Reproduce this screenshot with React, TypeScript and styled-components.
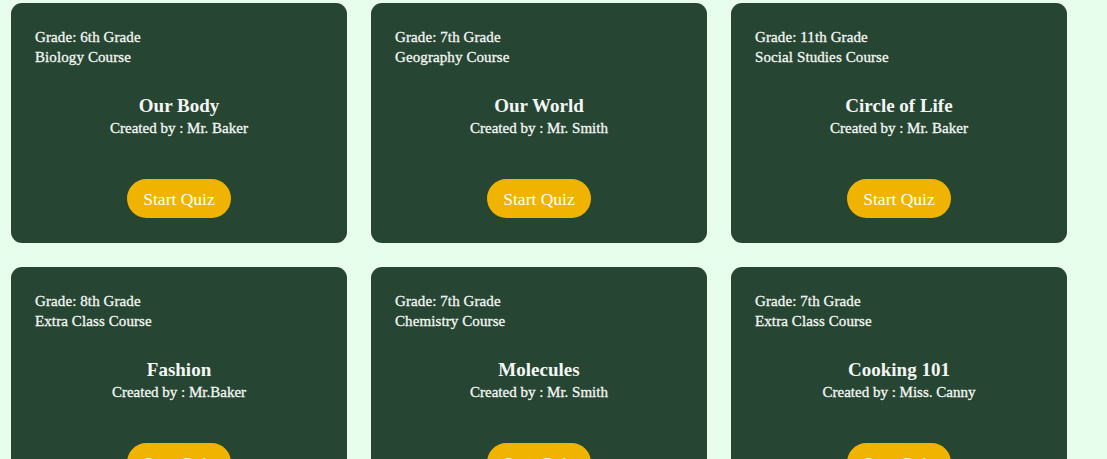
import React from "react";
import styled, { createGlobalStyle } from "styled-components";

const Global = createGlobalStyle`
  html, body { margin: 0; padding: 0; background: #e8feed; }
  body { font-family: "Liberation Serif", "Times New Roman", serif; }
`;

const Grid = styled.div`
  display: grid;
  grid-template-columns: repeat(3, 336px);
  gap: 24px;
  padding: 3px 11px;
`;

const Card = styled.div`
  background: #264532;
  border-radius: 11px;
  height: 240px;
  box-sizing: border-box;
  padding: 24px 24px 25px;
  display: flex;
  flex-direction: column;
  color: #f4f7f4;
`;

const Meta = styled.div`
  font-size: 15px;
  line-height: 20px;
  -webkit-text-stroke: 0.3px currentColor;
  letter-spacing: 0.1px;
`;

const Title = styled.h2`
  margin: 27px 0 0;
  text-align: center;
  font-size: 19px;
  line-height: 24px;
  font-weight: bold;
`;

const Author = styled.div`
  text-align: center;
  font-size: 15px;
  line-height: 20px;
  -webkit-text-stroke: 0.3px currentColor;
`;

const Button = styled.button`
  margin: 41px auto 0;
  width: 104px;
  height: 39px;
  border: none;
  border-radius: 20px;
  background: #f0b400;
  color: #ffffff;
  font-family: inherit;
  font-size: 17.5px;
  padding: 2px 0 0;
  cursor: pointer;
`;

const quizzes = [
  { grade: "6th", course: "Biology", title: "Our Body", by: "Mr. Baker" },
  { grade: "7th", course: "Geography", title: "Our World", by: "Mr. Smith" },
  { grade: "11th", course: "Social Studies", title: "Circle of Life", by: "Mr. Baker" },
  { grade: "8th", course: "Extra Class", title: "Fashion", by: "Mr.Baker" },
  { grade: "7th", course: "Chemistry", title: "Molecules", by: "Mr. Smith" },
  { grade: "7th", course: "Extra Class", title: "Cooking 101", by: "Miss. Canny" },
];

export default function App() {
  return (
    <>
      <Global />
      <Grid>
        {quizzes.map((q, i) => (
          <Card key={i}>
            <Meta>
              Grade: {q.grade} Grade
              <br />
              {q.course} Course
            </Meta>
            <Title>{q.title}</Title>
            <Author>Created by : {q.by}</Author>
            <Button>Start Quiz</Button>
          </Card>
        ))}
      </Grid>
    </>
  );
}
